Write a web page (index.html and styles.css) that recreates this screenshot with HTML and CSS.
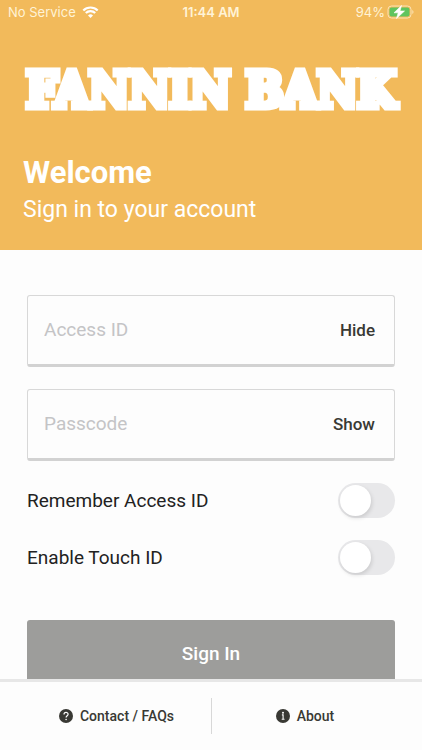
FILE: index.html
```html
<!DOCTYPE html>
<html lang="en">
<head>
<meta charset="utf-8">
<meta name="viewport" content="width=device-width, initial-scale=1">
<title>Fannin Bank</title>
<link rel="stylesheet" href="styles.css">
</head>
<body>
<header class="hero">
  <div class="status">
    <div class="status-left">
      <span>No Service</span>
      <svg class="wifi" viewBox="0 0 17 12" aria-hidden="true">
        <path d="M1.3 4.5a10.2 10.2 0 0 1 14.4 0M3.8 7a6.6 6.6 0 0 1 9.4 0" fill="none" stroke="currentColor" stroke-width="2.2"/>
        <path d="M8.500 12l-2.500-2.500a3.500 3.500 0 0 1 5 0z" fill="currentColor"/>
      </svg>
    </div>
    <span class="time">11:44 AM</span>
    <div class="status-right">
      <span>94%</span>
      <svg class="battery" viewBox="0 0 27 14" aria-hidden="true">
        <rect x="1" y="1" width="23" height="12" rx="3.500" fill="none" stroke="#fbe3b5"/>
        <rect x="2.500" y="2.500" width="20" height="9" rx="2" fill="#5fc45e"/>
        <path d="M25.300 5v4c1.600-.6 1.600-3.400 0-4z" fill="#fbe3b5"/>
        <path d="M14.500.5L7 7.800h4.200L9.500 13.500 17.500 6H13z" fill="#fff" stroke="#fff" stroke-width=".6"/>
      </svg>
    </div>
  </div>
  <div class="logo">FANNIN BANK</div>
  <h1>Welcome</h1>
  <p>Sign in to your account</p>
</header>
<main>
  <form>
    <div class="field">
      <input type="text" placeholder="Access ID" aria-label="Access ID">
      <button type="button">Hide</button>
    </div>
    <div class="field">
      <input type="password" placeholder="Passcode" aria-label="Passcode">
      <button type="button">Show</button>
    </div>
    <div class="option">
      <label for="remember">Remember Access ID</label>
      <input class="switch" type="checkbox" role="switch" id="remember">
    </div>
    <div class="option">
      <label for="touch">Enable Touch ID</label>
      <input class="switch" type="checkbox" role="switch" id="touch">
    </div>
    <button class="submit" type="submit">Sign In</button>
  </form>
</main>
<footer>
  <a href="#contact">
    <svg viewBox="0 0 14 14" aria-hidden="true">
      <circle cx="7" cy="7" r="7" fill="currentColor"/>
      <path d="M5 5.400C5 2.700 9.100 2.900 9.100 5.200 9.100 6.700 7.100 6.700 7.100 8.500" fill="none" stroke="#fff" stroke-width="1.200"/>
      <circle cx="7.100" cy="10.500" r=".8" fill="#fff"/>
    </svg>
    <span>Contact / FAQs</span>
  </a>
  <a href="#about">
    <svg viewBox="0 0 14 14" aria-hidden="true">
      <circle cx="7" cy="7" r="7" fill="currentColor"/>
      <circle cx="7" cy="3.800" r="1" fill="#fff"/>
      <path d="M5.900 5.900H7.100V10M5.700 10.300H8.500" fill="none" stroke="#fff" stroke-width="1.100"/>
    </svg>
    <span>About</span>
  </a>
</footer>
</body>
</html>
```
FILE: styles.css
```css
* {
  box-sizing: border-box;
}

body {
  margin: 0;
  height: 100vh;
  display: flex;
  flex-direction: column;
  background: #fdfdfd;
  color: #222;
  font-family: Roboto, "Liberation Sans", sans-serif;
}

.hero {
  flex: none;
  padding-bottom: 24px;
  background: #f2ba5b;
  color: #fff;
}

.status {
  display: grid;
  grid-template-columns: 1fr auto 1fr;
  align-items: center;
  height: 24px;
  padding: 0 8px;
  color: #fff3d6;
  font: 13px/16px Inter, sans-serif;
}

.status-left,
.status-right {
  display: flex;
  align-items: center;
  gap: 6px;
}

.status-right {
  justify-content: flex-end;
  gap: 2px;
}

.time {
  font-weight: 600;
}

.wifi {
  width: 17px;
  height: 12px;
  color: #fff;
}

.battery {
  width: 27px;
  height: 14px;
}

.logo {
  padding-top: 34px;
  text-align: center;
  white-space: nowrap;
  font: bold 49px/64px "DejaVu Serif Condensed", "DejaVu Serif", serif;
  -webkit-text-stroke: 7px #fff;
}

.hero h1,
.hero p {
  margin: 0;
  padding: 0 23px;
}

.hero h1 {
  padding-top: 31px;
  font-size: 31px;
  line-height: 40px;
  font-weight: 700;
}

.hero p {
  padding-top: 1px;
  font-size: 23px;
  line-height: 32px;
}

main {
  flex: 1;
  min-height: 0;
  overflow-y: auto;
  scrollbar-width: none;
}

form {
  padding: 45px 27px 24px;
}

.field {
  display: flex;
  align-items: center;
  height: 72px;
  margin-bottom: 22px;
  padding: 0 19px 0 16px;
  border: 1px solid #d8d8d8;
  border-bottom: 3px solid #d2d2d2;
  border-radius: 3px;
}

.field input {
  flex: 1;
  min-width: 0;
  padding: 0;
  border: 0;
  outline: 0;
  background: none;
  font: 19px/24px Roboto, sans-serif;
}

.field input::placeholder {
  color: #c4c4c6;
}

.field button {
  padding: 0;
  border: 0;
  background: none;
  color: #393934;
  font: 500 17px/24px Roboto, sans-serif;
}

.option {
  display: flex;
  align-items: center;
  justify-content: space-between;
  height: 35px;
  margin-bottom: 22px;
  font-size: 19px;
}

.switch {
  appearance: none;
  width: 57px;
  height: 35px;
  margin: 0;
  padding: 2px;
  border-radius: 18px;
  background: #e8e8ea;
}

.switch::before {
  content: "";
  display: block;
  width: 31px;
  height: 31px;
  border-radius: 50%;
  background: #fff;
  box-shadow: 1px 2px 4px #0002;
}

.switch:checked {
  background: #5fc45e;
}

.switch:checked::before {
  margin-left: auto;
}

.submit {
  display: block;
  width: 100%;
  height: 68px;
  margin-top: 45px;
  padding: 0;
  border: 0;
  border-radius: 3px;
  background: #9d9d9b;
  color: #fff;
  font: 500 19px/24px Roboto, sans-serif;
}

footer {
  flex: none;
  display: grid;
  grid-template-columns: 1fr 1fr;
  padding: 16px 0;
  border-top: 3px solid #e7e7e7;
}

footer a {
  display: flex;
  align-items: center;
  justify-content: center;
  gap: 7px;
  height: 36px;
  padding-left: 22px;
  color: #393934;
  text-decoration: none;
  font-size: 14px;
  font-weight: 500;
}

footer a + a {
  padding: 0 24px 0 0;
  border-left: 1px solid #d8d8d8;
}

footer svg {
  width: 14px;
  height: 14px;
}
```
